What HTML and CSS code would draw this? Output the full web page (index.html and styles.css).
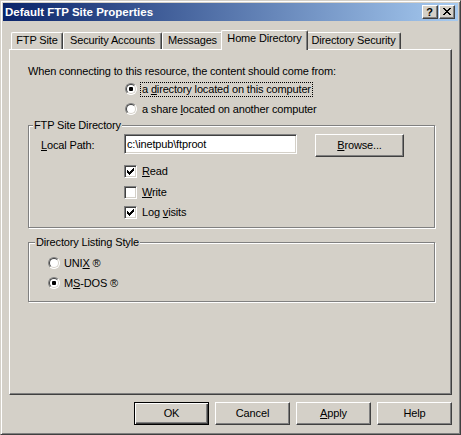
FILE: index.html
```html
<!DOCTYPE html>
<html>
<head>
<meta charset="utf-8">
<title>Default FTP Site Properties</title>
<link rel="stylesheet" href="styles.css">
</head>
<body>
<div class="window">
  <div class="titlebar">
    <span class="title">Default FTP Site Properties</span>
    <div class="caption-buttons">
      <span class="cap-btn help">?</span>
      <span class="cap-btn close">
        <svg width="8" height="7" viewBox="0 0 8 7" shape-rendering="crispEdges">
          <rect x="0" y="0" width="2" height="1"/><rect x="6" y="0" width="2" height="1"/>
          <rect x="1" y="1" width="2" height="1"/><rect x="5" y="1" width="2" height="1"/>
          <rect x="2" y="2" width="4" height="1"/>
          <rect x="3" y="3" width="2" height="1"/>
          <rect x="2" y="4" width="4" height="1"/>
          <rect x="1" y="5" width="2" height="1"/><rect x="5" y="5" width="2" height="1"/>
          <rect x="0" y="6" width="2" height="1"/><rect x="6" y="6" width="2" height="1"/>
        </svg>
      </span>
    </div>
  </div>

  <div class="tabs">
    <div class="tab tab-site">FTP Site</div>
    <div class="tab tab-accounts">Security Accounts</div>
    <div class="tab tab-messages">Messages</div>
    <div class="tab tab-home active">Home Directory</div>
    <div class="tab tab-security">Directory Security</div>
  </div>

  <div class="panel">
    <p class="intro">When connecting to this resource, the content should come from:</p>
    <div class="source-list">
      <div class="opt-row">
        <span class="radio checked"></span>
        <span class="opt-label focused">a <u>d</u>irectory located on this computer</span>
      </div>
      <div class="opt-row">
        <span class="radio"></span>
        <span class="opt-label">a share <u>l</u>ocated on another computer</span>
      </div>
    </div>

    <div class="group group-dir">
      <div class="group-title">FTP Site Directory</div>
      <div class="path-row">
        <span class="path-label"><u>L</u>ocal Path:</span>
        <div class="textbox">c:\inetpub\ftproot</div>
        <button class="btn browse"><u>B</u>rowse...</button>
      </div>
      <div class="check-list">
        <div class="check-row">
          <span class="check"><svg width="7" height="7" viewBox="0 0 7 7" shape-rendering="crispEdges"><rect x="0" y="2" width="1" height="3"/><rect x="1" y="3" width="1" height="3"/><rect x="2" y="4" width="1" height="3"/><rect x="3" y="3" width="1" height="3"/><rect x="4" y="2" width="1" height="3"/><rect x="5" y="1" width="1" height="3"/><rect x="6" y="0" width="1" height="3"/></svg></span>
          <span class="check-label"><u>R</u>ead</span>
        </div>
        <div class="check-row mid">
          <span class="check"></span>
          <span class="check-label"><u>W</u>rite</span>
        </div>
        <div class="check-row">
          <span class="check"><svg width="7" height="7" viewBox="0 0 7 7" shape-rendering="crispEdges"><rect x="0" y="2" width="1" height="3"/><rect x="1" y="3" width="1" height="3"/><rect x="2" y="4" width="1" height="3"/><rect x="3" y="3" width="1" height="3"/><rect x="4" y="2" width="1" height="3"/><rect x="5" y="1" width="1" height="3"/><rect x="6" y="0" width="1" height="3"/></svg></span>
          <span class="check-label">Log <u>v</u>isits</span>
        </div>
      </div>
    </div>

    <div class="group group-style">
      <div class="group-title">Directory Listing Style</div>
      <div class="style-list">
        <div class="opt-row">
          <span class="radio"></span>
          <span class="style-label">UNI<u>X</u> ®</span>
        </div>
        <div class="opt-row">
          <span class="radio checked"></span>
          <span class="style-label">M<u>S</u>-DOS ®</span>
        </div>
      </div>
    </div>
  </div>

  <div class="footer">
    <button class="btn default">OK</button>
    <button class="btn">Cancel</button>
    <button class="btn"><u>A</u>pply</button>
    <button class="btn">Help</button>
  </div>
</div>
</body>
</html>
```

FILE: styles.css
```css
html, body {
  margin: 0;
  padding: 0;
}

body {
  background: #d4d0c8;
  font-family: "Liberation Sans", Arial, sans-serif;
  font-size: 11px;
  letter-spacing: -0.15px;
  color: #000;
}

u {
  text-decoration: underline;
  text-underline-offset: 1px;
}

.window {
  width: 461px;
  height: 435px;
  box-sizing: border-box;
  border: 1px solid;
  border-color: #d4d0c8 #404040 #404040 #d4d0c8;
  box-shadow: inset 1px 1px #fff, inset -1px -1px #808080;
  padding: 2px;
  display: flex;
  flex-direction: column;
  background: #d4d0c8;
}

/* ---------- title bar ---------- */
.titlebar {
  height: 18px;
  flex: none;
  display: flex;
  align-items: center;
  justify-content: space-between;
  padding: 0 3px 0 2px;
  background: linear-gradient(to right, #0a246a, #a6caf0);
}

.title {
  color: #fff;
  font-weight: bold;
  font-size: 11.5px;
  letter-spacing: 0;
  line-height: 14px;
}

.caption-buttons {
  display: flex;
  gap: 1px;
}

.cap-btn {
  width: 16px;
  height: 14px;
  box-sizing: border-box;
  border: 1px solid;
  border-color: #fff #404040 #404040 #fff;
  box-shadow: inset -1px -1px #808080;
  background: #d4d0c8;
  display: flex;
  align-items: center;
  justify-content: center;
}

.cap-btn.help {
  font-weight: bold;
  font-size: 11px;
  letter-spacing: 0;
  line-height: 12px;
  padding: 0 1px 0 0;
}

.cap-btn.close {
  padding: 0 1px 1px 0;
}

.cap-btn svg {
  fill: #000;
  display: block;
}

/* ---------- tabs ---------- */
.tabs {
  height: 19px;
  flex: none;
  margin: 9px 6px 0;
  padding-left: 2px;
  display: flex;
  align-items: flex-end;
}

.tab {
  height: 17px;
  box-sizing: border-box;
  border-top: 1px solid #fff;
  border-left: 1px solid #fff;
  border-right: 1px solid #404040;
  border-radius: 2px 2px 0 0;
  box-shadow: inset -1px 0 #808080;
  background: #d4d0c8;
  text-align: center;
  line-height: 14px;
  white-space: nowrap;
  flex: none;
}

.tab-site { width: 52px; }
.tab-accounts { width: 99px; }
.tab-messages { width: 61px; }
.tab-home { width: 87px; }
.tab-security { width: 95px; }

.tab.active {
  height: 20px;
  margin: 0 -2px -1px;
  position: relative;
  z-index: 2;
}

/* ---------- panel ---------- */
.panel {
  height: 346px;
  flex: none;
  box-sizing: border-box;
  margin: 0 6px;
  padding-top: 15px;
  border: 1px solid;
  border-color: #fff #404040 #404040 #fff;
  box-shadow: inset -1px -1px #808080;
  display: flex;
  flex-direction: column;
}

.intro {
  margin: 0 0 0 18px;
  line-height: 13px;
}

.source-list {
  margin: 1px 0 0 115px;
  display: flex;
  flex-direction: column;
}

.opt-row {
  height: 20px;
  display: flex;
  align-items: center;
}

.radio {
  width: 12px;
  height: 12px;
  flex: none;
  box-sizing: border-box;
  border-radius: 50%;
  border: 1px solid;
  border-color: #808080 #fff #fff #808080;
  background: #fff;
  position: relative;
}

.radio::before {
  content: "";
  position: absolute;
  inset: 0;
  border-radius: 50%;
  border: 1px solid;
  border-color: #404040 #d4d0c8 #d4d0c8 #404040;
}

.radio.checked::after {
  content: "";
  position: absolute;
  left: 3px;
  top: 3px;
  width: 4px;
  height: 4px;
  border-radius: 1px;
  background: #000;
}

.opt-label {
  margin-left: 3px;
  padding: 0 1px;
  border: 1px solid transparent;
  line-height: 13px;
  white-space: nowrap;
}

.opt-label.focused {
  border: 1px dotted #000;
}

/* ---------- groups ---------- */
.group {
  margin: 6px 16px 0 18px;
  border: 1px solid #808080;
  box-shadow: inset 1px 1px #fff, 1px 1px #fff;
  padding: 0 12px 5px;
}

.group-style {
  margin-top: 14px;
  padding-bottom: 8px;
}

.group-title {
  width: fit-content;
  margin: -7px 0 0 -8px;
  padding: 0 1px;
  line-height: 13px;
  background: #d4d0c8;
  white-space: nowrap;
}

.group-style .group-title {
  margin-left: -6px;
}

.path-row {
  margin-top: 2px;
  height: 23px;
  display: flex;
  align-items: flex-start;
}

.path-label {
  width: 83px;
  flex: none;
  padding-top: 1px;
  line-height: 20px;
}

.textbox {
  width: 173px;
  height: 20px;
  flex: none;
  box-sizing: border-box;
  border: 1px solid;
  border-color: #808080 #fff #fff #808080;
  box-shadow: inset 1px 1px #404040, inset -1px -1px #d4d0c8;
  background: #fff;
  padding: 0 2px;
  line-height: 18px;
  white-space: nowrap;
  overflow: hidden;
}

.btn {
  width: 75px;
  height: 23px;
  box-sizing: border-box;
  margin: 0;
  padding: 0;
  border: 1px solid;
  border-color: #fff #404040 #404040 #fff;
  border-radius: 0;
  box-shadow: inset -1px -1px #808080;
  background: #d4d0c8;
  font-family: inherit;
  font-size: 11px;
  letter-spacing: inherit;
  color: #000;
  line-height: 13px;
  text-align: center;
  flex: none;
}

.btn.browse {
  width: 89px;
  margin-left: 18px;
}

.btn.default {
  border: 1px solid #000;
  box-shadow: inset 1px 1px #fff, inset -1px -1px #404040, inset -2px -2px #808080;
}

.check-list {
  margin: 4px 0 0 83px;
  display: flex;
  flex-direction: column;
}

.check-row {
  height: 20px;
  display: flex;
  align-items: center;
}

.check-row.mid {
  margin-top: 1px;
}

.check {
  width: 13px;
  height: 13px;
  flex: none;
  box-sizing: border-box;
  border: 1px solid;
  border-color: #808080 #fff #fff #808080;
  box-shadow: inset 1px 1px #404040, inset -1px -1px #d4d0c8;
  background: #fff;
  display: flex;
  align-items: center;
  justify-content: center;
}

.check svg {
  display: block;
  fill: #000;
}

.check-label {
  margin-left: 5px;
  line-height: 13px;
}

.style-list {
  margin: 4px 0 0 7px;
  display: flex;
  flex-direction: column;
}

.style-label {
  margin-left: 4px;
  line-height: 13px;
}

/* ---------- footer ---------- */
.footer {
  margin-top: 7px;
  padding-right: 6px;
  display: flex;
  justify-content: flex-end;
  gap: 6px;
}
```
